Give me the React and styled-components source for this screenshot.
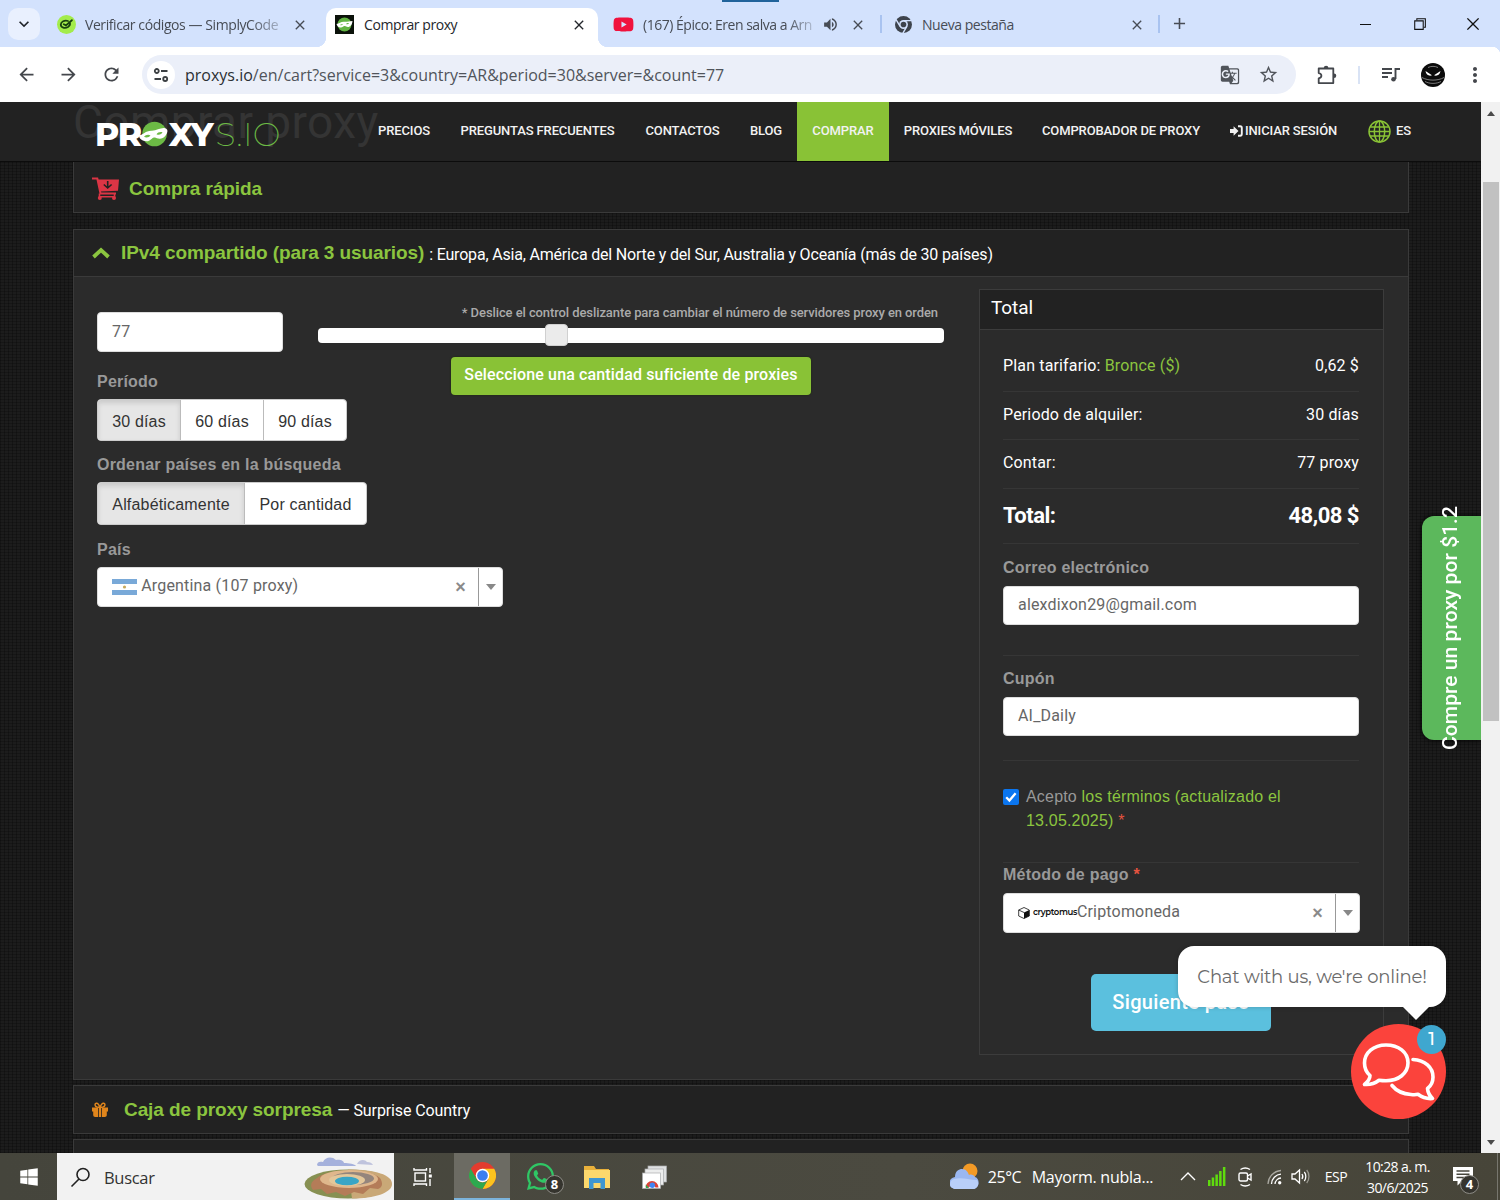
import React from "react";
import styled, { createGlobalStyle, css } from "styled-components";
import {
  MdArrowBack,
  MdArrowForward,
  MdRefresh,
  MdStarOutline,
  MdMoreVert,
  MdVolumeUp,
  MdGTranslate,
  MdClose,
  MdAdd,
  MdKeyboardArrowDown,
} from "react-icons/md";
import {
  VscChromeMinimize,
  VscChromeRestore,
  VscChromeClose,
} from "react-icons/vsc";
import { FaYoutube, FaWhatsapp, FaWindows } from "react-icons/fa";

const sans = `"Liberation Sans", Arial, sans-serif`;
const roboto = `Roboto, "Liberation Sans", sans-serif`;
const segoe = `"Open Sans", "Noto Sans", sans-serif`;
const montserrat = `Montserrat, Inter, sans-serif`;

const GlobalStyle = createGlobalStyle`
  * {
    box-sizing: border-box;
  }
  body {
    margin: 0;
    overflow: hidden;
    font-family: ${sans};
  }
  svg {
    display: block;
    flex: none;
  }
`;

const Screen = styled.div`
  display: flex;
  flex-direction: column;
  width: 1500px;
  height: 1200px;
  overflow: hidden;
`;

const Txt = styled.span`
  letter-spacing: ${(props) => props.$ls || 0}px;
  white-space: nowrap;
`;

/* ---------- browser ---------- */

const TabStrip = styled.div`
  position: relative;
  display: flex;
  align-items: flex-end;
  height: 47px;
  background: #d3e2fd;
  font-family: ${segoe};
  font-size: 14px;
  color: #474c55;
`;
const TopMark = styled.div`
  position: absolute;
  top: 0;
  left: 722px;
  width: 57px;
  height: 2px;
  background: #20639b;
`;
const TabSearch = styled.div`
  display: flex;
  align-items: center;
  justify-content: center;
  width: 32px;
  height: 32px;
  margin: 0 8px 7px;
  border-radius: 10px;
  background: #e9f0fe;
  color: #1f2328;
`;
const Tab = styled.div`
  position: relative;
  display: flex;
  align-items: center;
  width: ${(props) => props.$w}px;
  height: 39px;
  padding: 0 ${(props) => props.$pr || 10}px 6px ${(props) => props.$pl || 9}px;
  ${(props) =>
    props.$active &&
    css`
      background: #fff;
      color: #24272c;
      border-radius: 10px 10px 0 0;
      &:before,
      &:after {
        content: "";
        position: absolute;
        bottom: 0;
        width: 10px;
        height: 10px;
      }
      &:before {
        left: -10px;
        background: radial-gradient(circle at 0 0, transparent 10px, #fff 10.5px);
      }
      &:after {
        right: -10px;
        background: radial-gradient(
          circle at 100% 0,
          transparent 10px,
          #fff 10.5px
        );
      }
    `}
`;
const TabTitle = styled.div`
  flex: 1;
  margin-left: ${(props) => props.$ml || 10}px;
  white-space: nowrap;
  letter-spacing: ${(props) => props.$ls || 0}px;
  ${(props) =>
    props.$fade &&
    css`
      mask-image: linear-gradient(90deg, #000 80%, rgba(0, 0, 0, 0.1) 98%);
    `}
`;
const TabSep = styled.i`
  width: 2px;
  height: 18px;
  margin-bottom: 14px;
  background: #a9c3f0;
`;
const NewTab = styled.div`
  display: flex;
  justify-content: center;
  width: 38px;
  margin-bottom: 14px;
`;
const WindowButtons = styled.div`
  display: flex;
  align-items: center;
  margin-left: auto;
  height: 47px;
  color: #111;
  & > span {
    display: flex;
    justify-content: center;
    width: 54px;
  }
`;
const Toolbar = styled.div`
  position: relative;
  display: flex;
  align-items: center;
  height: 55px;
  padding-left: 5px;
  background: #fff;
  color: #44474c;
  &:before {
    content: "";
    position: absolute;
    top: 0;
    right: 0;
    width: 8px;
    height: 8px;
    background: radial-gradient(circle at 0 100%, transparent 8px, #d3e2fd 8.5px);
  }
`;
const ToolCell = styled.div`
  display: flex;
  flex: none;
  justify-content: center;
  width: ${(props) => props.$w || 42}px;
`;
const Omnibox = styled.div`
  display: flex;
  flex: none;
  align-items: center;
  width: 1154px;
  height: 39px;
  margin-left: 9px;
  padding: 0 17px 0 5px;
  border-radius: 20px;
  background: #ebeff9;
  font-family: ${segoe};
  font-size: 16px;
  color: #50545b;
  & b {
    font-weight: 400;
    color: #2c2f34;
  }
`;
const SiteInfo = styled.div`
  display: flex;
  align-items: center;
  justify-content: center;
  width: 28px;
  height: 28px;
  margin-right: 10px;
  border-radius: 50%;
  background: #fff;
`;
const UrlText = styled.div`
  flex: 1;
`;
const ToolSep = styled.i`
  flex: none;
  width: 2px;
  height: 18px;
  background: #d9e3f5;
`;

/* ---------- site ---------- */

const Viewport = styled.div`
  display: flex;
  height: 1051px;
`;
const Site = styled.div`
  position: relative;
  width: 1481px;
  height: 1051px;
  overflow: hidden;
  background-color: #1c1c1c;
  background-image:
    repeating-linear-gradient(90deg, rgba(0, 0, 0, 0.25) 0 1px, transparent 1px 4px),
    repeating-linear-gradient(0deg, rgba(0, 0, 0, 0.22) 0 1px, transparent 1px 3px);
`;
const Scrollbar = styled.div`
  display: flex;
  flex-direction: column;
  align-items: center;
  width: 19px;
  padding: 9px 0 8px 1px;
  background: #f1f1f1;
`;
const Thumb = styled.div`
  width: 16px;
  height: 539px;
  margin: 66px 0 auto;
  background: #c1c1c1;
`;
const Header = styled.header`
  position: relative;
  display: flex;
  height: 60px;
  padding-left: 95px;
  background: #222;
  border-bottom: 1px solid #0c0c0c;
`;
const Ghost = styled.div`
  position: absolute;
  top: -7px;
  left: 73px;
  font: 400 46px/54px ${roboto};
  letter-spacing: 0.4px;
  color: #343434;
`;
const Brand = styled.div`
  position: relative;
  display: flex;
  align-items: center;
  width: 268px;
  height: 64px;
  font: 800 33px/60px ${montserrat};
  letter-spacing: -1.3px;
  color: #fff;
  & svg {
    margin: 0 0 0 -3px;
  }
`;
const BrandThin = styled.span`
  margin-left: 3px;
  font: 200 33px/60px ${montserrat};
  letter-spacing: 0.3px;
  color: #6cba45;
`;
const NavItem = styled.div`
  position: relative;
  display: flex;
  align-items: center;
  justify-content: center;
  gap: 2px;
  width: ${(props) => props.$w}px;
  height: 59px;
  padding-bottom: 1px;
  font: 500 13px/18px ${roboto};
  letter-spacing: -0.12px;
  white-space: nowrap;
  color: #f2f2f2;
  background: ${(props) => (props.$active ? "#89c236" : "transparent")};
`;
const Panel = styled.section`
  width: 1336px;
  margin: ${(props) => props.$mt || 0}px 0 0 73px;
  border: 1px solid #3a3a3a;
  border-top-width: ${(props) => (props.$cut ? 0 : 1)}px;
  background: #222;
`;
const PanelHead = styled.div`
  display: flex;
  align-items: center;
  height: ${(props) => props.$h}px;
  padding: ${(props) => props.$pt || 0}px 0 0 18px;
  font: 700 19px/24px ${sans};
  color: #8bc53f;
  white-space: nowrap;
  & small {
    font: 400 16px/24px ${roboto};
    color: #fff;
    letter-spacing: ${(props) => props.$sls || 0}px;
    margin: 3px 0 0 5px;
  }
`;
const PanelTitle = styled.span`
  margin-left: ${(props) => props.$ml}px;
  letter-spacing: -0.09px;
`;
const PanelBody = styled.div`
  display: flex;
  height: 803px;
  padding: 0 24px 0 23px;
  border-top: 1px solid #3a3a3a;
  background: #2b2b2b;
`;
const Left = styled.div`
  width: 221px;
  padding-top: 35px;
  flex: none;
`;
const Label = styled.div`
  height: 24px;
  margin: ${(props) => props.$mt || 0}px 0 ${(props) => props.$mb || 6}px;
  font: 700 16px/24px ${sans};
  letter-spacing: 0.22px;
  white-space: nowrap;
  color: #999;
  & i {
    font-style: normal;
    color: #e5533f;
  }
`;
const Field = styled.div`
  display: flex;
  align-items: center;
  width: ${(props) => props.$w}px;
  height: ${(props) => props.$h || 39}px;
  padding: 0 0 ${(props) => props.$pb ?? 2}px 14px;
  border: 1px solid #ddd;
  border-radius: 4px;
  background: #fff;
  font: 400 16px/24px ${roboto};
  letter-spacing: 0.18px;
  color: #666;
`;
const SelectBox = styled(Field)`
  padding: 0 0 0 14px;
  & > span {
    padding-bottom: 2px;
  }
`;
const Clear = styled.b`
  margin: 0 12px 0 auto;
  font: 700 18px/20px ${sans};
  color: #8a8a8a;
`;
const Caret = styled.div`
  display: flex;
  align-items: center;
  justify-content: center;
  width: 24px;
  height: 38px;
  border-left: 1px solid #999;
  &:after {
    content: "";
    border: 5px solid transparent;
    border-top: 6px solid #888;
    border-bottom: 0;
  }
`;
const Group = styled.div`
  display: inline-flex;
  height: ${(props) => props.$h}px;
  border: 1px solid #ccc;
  border-radius: 4px;
  background: #fff;
  overflow: hidden;
  vertical-align: top;
`;
const Choice = styled.div`
  width: ${(props) => props.$w}px;
  font: 400 16px/43px ${sans};
  letter-spacing: 0.18px;
  text-align: center;
  color: #333;
  border-left: 1px solid #bbb;
  white-space: nowrap;
  &:first-child {
    border-left: 0;
  }
  ${(props) =>
    props.$on &&
    css`
      background: #e6e6e6;
      box-shadow: inset 0 3px 5px rgba(0, 0, 0, 0.125);
    `}
`;
const SliderCol = styled.div`
  display: flex;
  flex-direction: column;
  align-items: center;
  width: 626px;
  padding-top: 26px;
`;
const Hint = styled.div`
  align-self: flex-end;
  margin-right: 6px;
  height: 20px;
  font: 500 13px/20px ${roboto};
  letter-spacing: -0.09px;
  color: #aaa;
  white-space: nowrap;
`;
const Track = styled.div`
  position: relative;
  width: 626px;
  height: 15px;
  margin: 5px 0 14px;
  border-radius: 4px;
  background: #fff;
`;
const Handle = styled.div`
  position: absolute;
  top: -4px;
  left: 227px;
  width: 23px;
  height: 22px;
  border: 1px solid #d0d0d0;
  border-radius: 4px;
  background: #ebebeb;
`;
const GreenButton = styled.div`
  width: 360px;
  height: 38px;
  border-radius: 4px;
  background: #89c236;
  box-shadow: 0 0 2px #1c2b08;
  color: #fff;
  text-align: center;
  font: 500 16px/35px ${roboto};
  letter-spacing: 0.14px;
  white-space: nowrap;
`;
const Card = styled.aside`
  width: 405px;
  height: 766px;
  margin: 12px 0 0 auto;
  border: 1px solid #3c3c3c;
  flex: none;
`;
const CardHead = styled.div`
  height: 40px;
  padding-left: 11px;
  background: #222;
  border-bottom: 1px solid #3c3c3c;
  color: #fff;
  font: 400 19px/36px ${roboto};
  letter-spacing: -0.1px;
`;
const CardBody = styled.div`
  padding: 12px 24px 0 23px;
`;
const Row = styled.div`
  display: flex;
  align-items: center;
  justify-content: space-between;
  height: ${(props) => props.$h || 49}px;
  padding-bottom: ${(props) => (props.$big ? 1 : 2)}px;
  border-bottom: 1px solid #363636;
  color: #fff;
  font: ${(props) => (props.$big ? "700 22px" : "400 16px")}/24px ${roboto};
  letter-spacing: ${(props) => (props.$big ? -0.5 : 0.15)}px;
  & em {
    font-style: normal;
    color: #8bc53f;
  }
`;
const Block = styled.div`
  height: ${(props) => props.$h}px;
  padding-top: ${(props) => props.$pt || 0}px;
  border-bottom: ${(props) => (props.$last ? 0 : 1)}px solid #363636;
`;
const Terms = styled.div`
  display: flex;
  gap: 7px;
  font: 400 16px/24px ${sans};
  letter-spacing: 0.19px;
  color: #999;
  & em {
    font-style: normal;
    color: #8bc53f;
  }
  & i {
    font-style: normal;
    color: #e5533f;
  }
  & svg {
    margin-top: 4px;
  }
`;
const NextButton = styled.div`
  width: 180px;
  height: 57px;
  margin: 40px 0 0 88px;
  border-radius: 5px;
  background: #5bc0de;
  color: #fff;
  text-align: center;
  font: 500 20px/56px ${roboto};
  letter-spacing: 0.35px;
`;
const SideOffer = styled.div`
  position: absolute;
  top: 414px;
  right: 0;
  display: flex;
  align-items: center;
  justify-content: center;
  width: 59px;
  height: 224px;
  border-radius: 12px 0 0 12px;
  background: #5cb85c;
  box-shadow: 0 0 5px #000;
  & span {
    writing-mode: vertical-rl;
    transform: rotate(180deg);
    font: 500 21px/24px ${roboto};
    letter-spacing: 0.05px;
    color: #fff;
    white-space: nowrap;
    margin-right: 3px;
  }
`;
const ChatBubble = styled.div`
  position: absolute;
  top: 844px;
  left: 1178px;
  width: 268px;
  height: 61px;
  border-radius: 16px;
  background: #fff;
  color: #6b6b6b;
  text-align: center;
  font: 400 18px/62px ${montserrat};
  letter-spacing: -0.2px;
  white-space: nowrap;
  box-shadow: 0 0 5px rgba(0, 0, 0, 0.2);
  &:after {
    content: "";
    position: absolute;
    left: 224px;
    top: 60px;
    border: 14px solid transparent;
    border-top-color: #fff;
    border-bottom: 0;
  }
`;
const ChatButton = styled.div`
  position: absolute;
  top: 922px;
  left: 1351px;
  width: 95px;
  height: 95px;
  border-radius: 50%;
  background: #fb433c;
`;
const Count = styled.div`
  position: absolute;
  top: 1px;
  right: 0;
  width: 29px;
  height: 29px;
  border-radius: 50%;
  background: #3fa7cf;
  color: #fff;
  text-align: center;
  font: 500 18px/29px ${montserrat};
`;

/* ---------- taskbar ---------- */

const Taskbar = styled.div`
  display: flex;
  align-items: center;
  height: 47px;
  background: linear-gradient(90deg, #45453c, #4b4a40 60%, #474539);
  color: #fff;
  font: 400 16px/22px ${segoe};
`;
const Slot = styled.div`
  position: relative;
  display: flex;
  flex: none;
  align-items: center;
  justify-content: center;
  width: ${(props) => props.$w}px;
  height: 47px;
  padding-right: ${(props) => props.$pr || 0}px;
  white-space: nowrap;
  letter-spacing: ${(props) => props.$ls || 0}px;
  font-size: ${(props) => props.$fs || 16}px;
  ${(props) =>
    props.$on &&
    css`
      background: #6c6b63;
      border-bottom: 2px solid #7cb4dd;
    `}
`;
const SearchBox = styled.div`
  display: flex;
  flex: none;
  align-items: center;
  width: 337px;
  height: 47px;
  padding: 2px 2px 0 13px;
  background: #f2f2f2;
  color: #333;
  font-size: 16.5px;
  & span {
    margin: 0 auto 0 13px;
    letter-spacing: -0.3px;
  }
`;
const TaskBadge = styled.b`
  position: absolute;
  left: ${(props) => props.$x}px;
  top: ${(props) => props.$y}px;
  width: 19px;
  height: 19px;
  border: 1px solid #8d8c86;
  border-radius: 50%;
  background: #35342e;
  font: 700 13px/17px ${segoe};
  text-align: center;
`;
const Tray = styled.div`
  display: flex;
  flex: none;
  align-items: center;
  margin-left: 264px;
`;
const Clock = styled.div`
  width: 81px;
  text-align: center;
  font-size: 14px;
  line-height: 21px;
  letter-spacing: -0.6px;
  white-space: nowrap;
`;
const Edge = styled.i`
  width: 1px;
  height: 47px;
  margin-left: auto;
  margin-right: 2px;
  background: #77766e;
`;

/* ---------- drawings ---------- */

function CodesIcon() {
  return (
    <svg width="19" height="19" viewBox="0 0 19 19">
      <circle cx="9.5" cy="9.5" r="9.5" fill="#a3ec4b" />
      <path
        d="M11 6C7.500 4.800 4 6.800 3.800 9.600c-.1 3 4.200 4.300 7.200 2.400 1.800-1.200 2.300-2.600 1.900-3.900M6.800 9.300l2.100 1.100 6-5.200"
        fill="none"
        stroke="#17420f"
        strokeWidth="1.800"
        strokeLinecap="round"
      />
    </svg>
  );
}

function MaskIcon() {
  return (
    <svg width="19" height="19" viewBox="0 0 19 19">
      <rect width="19" height="19" fill="#0b120a" />
      <circle cx="9.5" cy="9.5" r="7" fill="#62b443" />
      <path
        d="M1.500 9c3-.4 4.500-2.600 8-2.200 2.500.2 5-.8 8-.8-.3 3.500-2 6-4.600 6-1.700 0-2-1.200-3.400-1-1.200.2-2 1.700-4 1.500C3.300 12.300 2 11 1.500 9z"
        fill="#fff"
      />
      <path d="M5 10c1-1 2.200-1 3-.4-.8.8-2 1-3 .4zM11 9c.8-.9 1.900-1.100 3-.7-.6.9-1.800 1.300-3 .7z" fill="#62b443" />
    </svg>
  );
}

function BrandMask() {
  return (
    <svg width="31" height="26" viewBox="0 0 31 26">
      <circle cx="16.500" cy="13" r="12.300" fill="#6cba45" />
      <path
        d="M1 14c3.500.5 6.500-4.500 12.500-4.300 5 .2 9-3.200 13.500-2.500 2.500.4 3 2.800 1.800 5.300-1.300 3-3.800 5-6.800 5.200-3 .1-3.800-1.600-6-1.200-2.500.5-3.600 3.900-7.500 3.800C4.500 20 1 18 1 14z"
        fill="#fff"
      />
      <path d="M6 15.800c1.500-2 4.500-2.600 6.500-1.300-1.300 1.900-4.200 2.600-6.500 1.300zM18.500 13.200c1.300-2 3.700-2.700 6-2-.8 2-3.500 3.300-6 2z" fill="#6cba45" />
    </svg>
  );
}

function ChromeMono() {
  return (
    <svg width="17" height="17" viewBox="0 0 48 48">
      <circle cx="24" cy="24" r="24" fill="#3d434c" />
      <path d="M24 13h23M33.500 29.500 22 49M14.500 29.500 3 10" stroke="#d3e2fd" strokeWidth="4" />
      <circle cx="24" cy="24" r="12.500" fill="#d3e2fd" />
      <circle cx="24" cy="24" r="8" fill="#3d434c" />
    </svg>
  );
}

function ChromeLogo() {
  return (
    <svg width="27" height="27" viewBox="0 0 48 48">
      <circle cx="24" cy="24" r="24" fill="#e33b2e" />
      <path d="M24 12h20.800A24 24 0 0 1 24 48l10.400-18z" fill="#fcc31e" />
      <path d="M3.200 12 13.600 30a12 12 0 0 0 20.800 0L24 48A24 24 0 0 1 3.200 12z" fill="#2da94f" />
      <circle cx="24" cy="24" r="12" fill="#fff" />
      <circle cx="24" cy="24" r="9.5" fill="#3a7ef0" />
    </svg>
  );
}

function TuneIcon() {
  return (
    <svg width="16" height="16" viewBox="0 0 16 16" fill="none" stroke="#3c4043" strokeWidth="1.800">
      <circle cx="3.800" cy="4" r="2" />
      <path d="M8 4h6.500M1.500 12H8" />
      <circle cx="12.200" cy="12" r="2" />
    </svg>
  );
}

function PuzzleIcon() {
  return (
    <svg width="20" height="20" viewBox="0 0 20 20" fill="none" stroke="currentColor" strokeWidth="1.800" strokeLinejoin="round">
      <path d="M1.700 3.500h14.600v14.600H1.700v-4.800c3.600-.6 3.600-4.600 0-5.200z" />
      <path d="M6.800 3a2.300 2.300 0 0 1 4.600 0zM17 8.500a2.300 2.300 0 0 1 0 4.600z" fill="currentColor" stroke="none" />
    </svg>
  );
}

function MediaIcon() {
  return (
    <svg width="20" height="18" viewBox="0 0 20 18" fill="none" stroke="currentColor" strokeWidth="1.900">
      <path d="M1 3h10M1 7h10M1 11h6M14.500 13V3H19" />
      <circle cx="12.500" cy="13.200" r="2.300" fill="currentColor" stroke="none" />
    </svg>
  );
}

function Avatar() {
  return (
    <svg width="24" height="24" viewBox="0 0 24 24">
      <circle cx="12" cy="12" r="12" fill="#0b0b0b" />
      <path d="M4.500 8l6.500 4.300c-3 1.200-6-.6-6.500-4.300zM19.500 8 13 12.300c3 1.200 6-.6 6.500-4.300z" fill="#fff" />
      <path d="M1 14.500c6 3.500 16 3.500 22 0M4 18.500c4.500 2.500 11.500 2.500 16 0M7 4.500c3-1.500 7-1.500 10 0" fill="none" stroke="#aaa" strokeWidth=".7" />
    </svg>
  );
}

function CartIcon() {
  return (
    <svg width="27" height="24" viewBox="0 0 27 24">
      <path d="M0 1.500h5.300l3.200 15H24" fill="none" stroke="#dc3545" strokeWidth="2" />
      <path d="M5.500 2.500H27l-1 11.200-18 .8z" fill="#dc3545" />
      <path d="M15.700 4v6.500M11.800 7.500l3.900 3.500 3.900-3.500" fill="none" stroke="#222" strokeWidth="1.600" />
      <path d="M7.500 16.500v3.300h15v-3.300" fill="none" stroke="#dc3545" strokeWidth="1.600" />
      <circle cx="7.800" cy="21" r="2" fill="#dc3545" />
      <circle cx="22" cy="21" r="2" fill="#dc3545" />
    </svg>
  );
}

function GiftIcon() {
  return (
    <svg width="16" height="16" viewBox="0 0 16 16">
      <path d="M0 5.500h6.200v4H0zM9.800 5.500H16v4H9.800zM1.200 9.500h5V15h-3c-1.200 0-2-.8-2-2zM9.800 9.500h5V13c0 1.200-.8 2-2 2h-3z" fill="#e0851c" />
      <path d="M7 6h2v9H7z" fill="#e0851c" />
      <path d="M8 5.500C6.800 2 5.500 1 4.200 1.300 2.500 1.700 2.700 4.500 5 5zM8 5.500C9.200 2 10.500 1 11.800 1.300c1.700.4 1.500 3.200-.8 3.700z" fill="none" stroke="#e0851c" strokeWidth="1.500" />
    </svg>
  );
}

function ChevronUp() {
  return (
    <svg width="18" height="12" viewBox="0 0 18 12">
      <path d="M1.500 10 9 3l7.500 7" fill="none" stroke="#8bc53f" strokeWidth="3.800" />
    </svg>
  );
}

function SignIn() {
  return (
    <svg width="13" height="12" viewBox="0 0 13 12">
      <path d="M0 4h3.600V1.200L8.500 6l-4.900 4.800V8H0z" fill="#f2f2f2" />
      <path d="M8 1.300h2.200c1 0 1.600.7 1.600 1.600v6.200c0 .9-.6 1.600-1.600 1.600H8" fill="none" stroke="#f2f2f2" strokeWidth="1.900" />
    </svg>
  );
}

function Globe() {
  return (
    <svg width="23" height="23" viewBox="0 0 23 23" fill="none" stroke="#89c236" strokeWidth="1.500">
      <circle cx="11.5" cy="11.5" r="10.500" />
      <ellipse cx="11.5" cy="11.5" rx="5.200" ry="10.500" />
      <path d="M11.500 1v21M2.200 7h18.600M2.200 16h18.600M1 11.500h21" strokeWidth="1.300" />
    </svg>
  );
}

function Flag() {
  return (
    <svg width="25" height="16" viewBox="0 0 25 16">
      <rect width="25" height="16" fill="#fff" />
      <rect width="25" height="5" fill="#79a9d8" />
      <rect y="11" width="25" height="5" fill="#79a9d8" />
      <circle cx="12.500" cy="8" r="1.600" fill="#c6a95c" />
    </svg>
  );
}

const CryptoWord = styled.span`
  margin-left: 3px;
  font: 600 8.5px/20px ${montserrat};
  letter-spacing: -0.38px;
  color: #111;
`;

function CubeIcon() {
  return (
    <svg width="12" height="12" viewBox="0 0 12 12">
      <path d="M6 .5 11.300 3v6L6 11.500.7 9V3z" fill="#fff" stroke="#111" strokeWidth=".8" />
      <path d="M6 5.500 11.300 3v6L6 11.500z" fill="#111" />
      <path d="M.7 3 6 5.500" stroke="#111" strokeWidth=".8" />
    </svg>
  );
}

function CheckIcon() {
  return (
    <svg width="16" height="16" viewBox="0 0 16 16">
      <rect width="16" height="16" rx="2" fill="#0b76f0" />
      <path d="M3.200 8.300l3.200 3.200 6.200-7.300" fill="none" stroke="#fff" strokeWidth="2.300" />
    </svg>
  );
}

function ChatIcon() {
  return (
    <svg width="95" height="95" viewBox="0 0 95 95" fill="none" stroke="#fff" strokeWidth="3.600" strokeLinejoin="round" strokeLinecap="round">
      <path d="M35 21c-12.500 0-21.500 7.700-21.500 18 0 5.500 2 9.500 5.500 12.500 0 3.500-2.500 6.500-5.500 9 6.500.5 11-1.500 14.500-4.200 2.500.4 4.600.5 7 .5 12.500 0 22-7.500 22-18S47.500 21 35 21z" />
      <path d="M62 35.500c12 .5 20 8 20 17.500 0 5-2.200 9-5.500 11.500.3 4 2 7 5 10-6 .5-10.500-1.200-14.500-4.200-2.500.6-4.500.5-7 .2-8-.5-14.500-3.500-19-9" />
    </svg>
  );
}

function Crater() {
  return (
    <svg width="88" height="43" viewBox="0 0 88 43">
      <path d="M13 9c0-3 3-4 6-3 2-5 9-6 13-2 4-1 8 1 8 3 5 0 11 1 12 3H14z" fill="#a5b1dc" />
      <path d="M53 8c2-5 8-5 10-2 3 0 5 1 6 3z" fill="#bfc3dd" />
      <ellipse cx="44" cy="28" rx="43.500" ry="14.500" fill="#879052" />
      <path d="M44 13.500c28 0 44 5.500 44 14.500S70 42.500 48 42.500z" fill="#c9a877" />
      <path d="M13 22c10-9 52-10 63 0 3 5 3 9-2 11l-8-1-7 6-9-2-9 4-9-4-9 2-6-5-8 1c-3-4-3-8 4-12z" fill="#b47c58" />
      <ellipse cx="45" cy="23" rx="29" ry="9" fill="#dfb78c" />
      <ellipse cx="49" cy="22.500" rx="21" ry="6.500" fill="#94857c" />
      <ellipse cx="43" cy="24" rx="18" ry="6" fill="#e3c79a" />
      <ellipse cx="43" cy="25" rx="12" ry="4.300" fill="#39a5c6" />
    </svg>
  );
}

function SearchGlass() {
  return (
    <svg width="21" height="21" viewBox="0 0 21 21" fill="none" stroke="#222" strokeWidth="1.600">
      <circle cx="13" cy="7.500" r="6" />
      <path d="M9 12 1.500 19.500" />
    </svg>
  );
}

function TaskView() {
  return (
    <svg width="20" height="20" viewBox="0 0 20 20" fill="none" stroke="#fff" strokeWidth="1.400">
      <rect x="2" y="6" width="10.500" height="8" />
      <path d="M1 1v2h12.500V1M1 19v-2h12.500v2M17 1v5M17 12v7" />
      <rect x="15.800" y="7.500" width="3" height="3" fill="#fff" stroke="none" />
    </svg>
  );
}

function FolderIcon() {
  return (
    <svg width="26" height="24" viewBox="0 0 26 24">
      <path d="M0 1h10l2 3h13v18H0z" fill="#e9b13b" />
      <path d="M0 5h26v18H0z" fill="#fbd86d" />
      <path d="M5 24V13h16v11h-4.500v-6h-7v6z" fill="#3d96d2" />
    </svg>
  );
}

function CaptureIcon() {
  return (
    <svg width="25" height="24" viewBox="0 0 25 24">
      <rect x="6" y="1" width="18.500" height="16" fill="#dfe1e2" stroke="#a9abad" strokeWidth=".7" />
      <rect x="3" y="4" width="18.500" height="16" fill="#eceded" stroke="#a9abad" strokeWidth=".7" />
      <rect x=".5" y="8" width="18" height="15.500" fill="#fff" stroke="#a9abad" strokeWidth=".7" />
      <path d="M3.500 22.500a6.500 6.500 0 1 1 13 0h-3a3.500 3.500 0 0 0-6.500 0z" fill="#dc4437" />
      <path d="M3.700 19.500 7 23H4z" fill="#2da94f" />
      <circle cx="10.300" cy="20.300" r="2.700" fill="#4285f4" />
    </svg>
  );
}

function WeatherIcon() {
  return (
    <svg width="29" height="27" viewBox="0 0 29 27">
      <circle cx="20" cy="8" r="7.500" fill="#f39a26" />
      <path d="M6 26a6 6 0 0 1-1-12C5 8 9 6 12 6c4 0 6 3 7 6 2-1 5 0 6 2 6 2 4 12-2 12z" fill="#9ab7f1" />
      <path d="M6 26c-7 0-8-8-2-10 8-2 14 1 23 1 3 4 0 9-4 9z" fill="#b9cff9" />
    </svg>
  );
}

function SignalIcon() {
  return (
    <svg width="18" height="19" viewBox="0 0 18 19" fill="#5fdc0e">
      <rect x="0" y="13" width="2.500" height="6" />
      <rect x="3.700" y="10.500" width="2.500" height="8.500" />
      <rect x="7.400" y="7.500" width="2.500" height="11.500" />
      <rect x="11.100" y="4" width="2.500" height="15" />
      <rect x="14.900" y="0" width="2.500" height="19" />
    </svg>
  );
}

function MeetIcon() {
  return (
    <svg width="15" height="20" viewBox="0 0 15 20" fill="none" stroke="#fff" strokeWidth="1.400">
      <rect x="1" y="6" width="8.500" height="8" rx="1.500" />
      <path d="M9.500 9 13 7v6l-3.500-2M2.500 2.500c3-2 6.500-2 9.500 0M2.500 17.500c3 2 6.500 2 9.500 0" />
    </svg>
  );
}

function WifiIcon() {
  return (
    <svg width="16" height="17" viewBox="0 0 16 17" fill="none" stroke="#fff" strokeWidth="1.300">
      <path d="M1 16A14 14 0 0 1 14 2.500" stroke="#a9a8a0" />
      <path d="M4.500 16A10 10 0 0 1 14 6.200M8 16a6.500 6.500 0 0 1 6-6" />
      <circle cx="12.700" cy="14.700" r="1.700" fill="#fff" stroke="none" />
    </svg>
  );
}

function SoundIcon() {
  return (
    <svg width="19" height="17" viewBox="0 0 19 17" fill="none" stroke="#fff" strokeWidth="1.300">
      <path d="M1 6h3l4.500-4v13L4 11H1z" />
      <path d="M11 6c1 1.500 1 3.500 0 5M13.300 4c2 2.500 2 6.500 0 9" />
      <path d="M15.700 2c3 3.500 3 9.500 0 13" stroke="#99988f" />
    </svg>
  );
}

function NoteIcon() {
  return (
    <svg width="20" height="19" viewBox="0 0 20 19">
      <path d="M0 0h20v14H9l-4.500 4.500V14H0z" fill="#fff" />
      <path d="M3.500 4h13M3.500 7.300h13M3.500 10.500h8" stroke="#47463c" strokeWidth="1.400" />
    </svg>
  );
}

function Arrow({ down }) {
  return (
    <svg width="8" height="5" viewBox="0 0 8 5">
      <path d={down ? "M0 0h8L4 5z" : "M0 5h8L4 0z"} fill="#4a4a4a" />
    </svg>
  );
}

/* ---------- sections ---------- */

function Browser() {
  return (
    <>
      <TabStrip>
        <TopMark />
        <TabSearch>
          <MdKeyboardArrowDown size={20} />
        </TabSearch>
        <Tab $w={278} $pr={18}>
          <CodesIcon />
          <TabTitle $fade $ml={9} $ls={-0.42}>
            Verificar códigos — SimplyCode
          </TabTitle>
          <MdClose size={16} />
        </Tab>
        <Tab $w={272} $active $pr={11}>
          <MaskIcon />
          <TabTitle $ls={-0.42}>Comprar proxy</TabTitle>
          <MdClose size={16} />
        </Tab>
        <Tab $w={282} $pl={15} $pr={14}>
          <FaYoutube size={21} color="#f0123d" />
          <TabTitle $fade $ml={9} $ls={-0.48}>
            (167) Épico: Eren salva a Arn
          </TabTitle>
          <MdVolumeUp size={17} />
          <Txt>&nbsp;&nbsp;&nbsp;</Txt>
          <MdClose size={16} />
        </Tab>
        <TabSep />
        <Tab $w={276} $pl={13} $pr={13}>
          <ChromeMono />
          <TabTitle $ls={-0.45}>Nueva pestaña</TabTitle>
          <MdClose size={16} />
        </Tab>
        <TabSep />
        <NewTab>
          <MdAdd size={19} />
        </NewTab>
        <WindowButtons>
          <span>
            <VscChromeMinimize size={16} />
          </span>
          <span>
            <VscChromeRestore size={17} />
          </span>
          <span>
            <VscChromeClose size={18} />
          </span>
        </WindowButtons>
      </TabStrip>
      <Toolbar>
        <ToolCell>
          <MdArrowBack size={21} />
        </ToolCell>
        <ToolCell $w={43}>
          <MdArrowForward size={21} />
        </ToolCell>
        <ToolCell $w={43}>
          <MdRefresh size={21} />
        </ToolCell>
        <Omnibox>
          <SiteInfo>
            <TuneIcon />
          </SiteInfo>
          <UrlText>
            <b>proxys.io</b>
            /en/cart?service=3&amp;country=AR&amp;period=30&amp;server=&amp;count=77
          </UrlText>
          <ToolCell $w={56}>
            <MdGTranslate size={20} />
          </ToolCell>
          <ToolCell $w={21}>
            <MdStarOutline size={21} />
          </ToolCell>
        </Omnibox>
        <ToolCell $w={62}>
          <PuzzleIcon />
        </ToolCell>
        <ToolSep />
        <ToolCell $w={61}>
          <MediaIcon />
        </ToolCell>
        <ToolCell $w={24}>
          <Avatar />
        </ToolCell>
        <ToolCell $w={60}>
          <MdMoreVert size={24} />
        </ToolCell>
      </Toolbar>
    </>
  );
}

function SiteHeader() {
  return (
    <Header>
      <Ghost>Comprar proxy</Ghost>
      <Brand>
        PR
        <BrandMask />
        XY
        <BrandThin>S.IO</BrandThin>
      </Brand>
      <NavItem $w={82}>PRECIOS</NavItem>
      <NavItem $w={185}>PREGUNTAS FRECUENTES</NavItem>
      <NavItem $w={105}>CONTACTOS</NavItem>
      <NavItem $w={62}>BLOG</NavItem>
      <NavItem $w={92} $active>
        COMPRAR
      </NavItem>
      <NavItem $w={138}>PROXIES MÓVILES</NavItem>
      <NavItem $w={188}>COMPROBADOR DE PROXY</NavItem>
      <NavItem $w={137}>
        <SignIn />
        INICIAR SESIÓN
      </NavItem>
      <NavItem $w={75}>
        <Globe />
        <Txt>&nbsp;ES</Txt>
      </NavItem>
    </Header>
  );
}

function OrderForm() {
  return (
    <>
      <Left>
        <Field $w={186} $h={40} $pb={0}>
          77
        </Field>
        <Label $mt={18} $mb={5}>
          Período
        </Label>
        <Group $h={42}>
          <Choice $w={82} $on>
            30 días
          </Choice>
          <Choice $w={83}>60 días</Choice>
          <Choice $w={83}>90 días</Choice>
        </Group>
        <Label $mt={12} $mb={5}>
          Ordenar países en la búsqueda
        </Label>
        <Group $h={43}>
          <Choice $w={146} $on>
            Alfabéticamente
          </Choice>
          <Choice $w={122}>Por cantidad</Choice>
        </Group>
        <Label $mt={13} $mb={5}>
          País
        </Label>
        <SelectBox $w={406} $h={40}>
          <Flag />
          <span>&nbsp;Argentina (107 proxy)</span>
          <Clear>×</Clear>
          <Caret />
        </SelectBox>
      </Left>
      <SliderCol>
        <Hint>
          * Deslice el control deslizante para cambiar el número de servidores
          proxy en orden
        </Hint>
        <Track>
          <Handle />
        </Track>
        <GreenButton>Seleccione una cantidad suficiente de proxies</GreenButton>
      </SliderCol>
    </>
  );
}

function Summary() {
  return (
    <Card>
      <CardHead>Total</CardHead>
      <CardBody>
        <Row $h={50}>
          <span>
            Plan tarifario: <em>Bronce ($)</em>
          </span>
          <span>0,62 $</span>
        </Row>
        <Row $h={48}>
          <span>Periodo de alquiler:</span>
          <span>30 días</span>
        </Row>
        <Row>
          <span>Contar:</span>
          <span>77 proxy</span>
        </Row>
        <Row $h={55} $big>
          <span>Total:</span>
          <span>48,08 $</span>
        </Row>
        <Block $h={112} $pt={12}>
          <Label>Correo electrónico</Label>
          <Field $w={356}>alexdixon29@gmail.com</Field>
        </Block>
        <Block $h={105} $pt={11}>
          <Label>Cupón</Label>
          <Field $w={356}>AI_Daily</Field>
        </Block>
        <Block $h={102} $pt={24}>
          <Terms>
            <CheckIcon />
            <span>
              Acepto <em>los términos (actualizado el</em>
              <br />
              <em>13.05.2025)</em> <i>*</i>
            </span>
          </Terms>
        </Block>
        <Block $h={71} $last>
          <Label>
            Método de pago <i>*</i>
          </Label>
          <SelectBox $w={357} $h={40}>
            <CubeIcon />
            <CryptoWord>cryptomus</CryptoWord>
            <span>Criptomoneda</span>
            <Clear>×</Clear>
            <Caret />
          </SelectBox>
        </Block>
        <NextButton>Siguiente paso</NextButton>
      </CardBody>
    </Card>
  );
}

function Tasks() {
  return (
    <Taskbar>
      <Slot $w={57}>
        <FaWindows size={20} />
      </Slot>
      <SearchBox>
        <SearchGlass />
        <span>Buscar</span>
        <Crater />
      </SearchBox>
      <Slot $w={60} $pr={2}>
        <TaskView />
      </Slot>
      <Slot $w={56} $on>
        <ChromeLogo />
      </Slot>
      <Slot $w={60}>
        <FaWhatsapp size={31} color="#2fc765" />
        <TaskBadge $x={35} $y={22}>
          8
        </TaskBadge>
      </Slot>
      <Slot $w={54}>
        <FolderIcon />
      </Slot>
      <Slot $w={60}>
        <CaptureIcon />
      </Slot>
      <Tray>
        <Slot $w={32}>
          <WeatherIcon />
        </Slot>
        <Slot $w={49} $ls={-0.4}>
          25°C
        </Slot>
        <Slot $w={139} $pr={12} $ls={-0.25}>
          Mayorm. nubla...
        </Slot>
        <Slot $w={40}>
          <svg width="16" height="9" viewBox="0 0 16 9">
            <path d="M1 8 8 1l7 7" fill="none" stroke="#fff" strokeWidth="1.400" />
          </svg>
        </Slot>
        <Slot $w={18}>
          <SignalIcon />
        </Slot>
        <Slot $w={38}>
          <MeetIcon />
        </Slot>
        <Slot $w={22}>
          <WifiIcon />
        </Slot>
        <Slot $w={29}>
          <SoundIcon />
        </Slot>
        <Slot $w={42} $fs={14} $ls={-0.5}>
          ESP
        </Slot>
        <Clock>
          10:28 a. m.
          <br />
          30/6/2025
        </Clock>
        <Slot $w={50}>
          <NoteIcon />
          <TaskBadge $x={22} $y={22}>
            4
          </TaskBadge>
        </Slot>
      </Tray>
      <Edge />
    </Taskbar>
  );
}

export default function App() {
  return (
    <Screen>
      <GlobalStyle />
      <Browser />
      <Viewport>
        <Site>
          <SiteHeader />
          <Panel $cut>
            <PanelHead $h={50} $pt={4}>
              <CartIcon />
              <PanelTitle $ml={10}>Compra rápida</PanelTitle>
            </PanelHead>
          </Panel>
          <Panel $mt={16}>
            <PanelHead $h={46} $sls={-0.19}>
              <ChevronUp />
              <PanelTitle $ml={11}>IPv4 compartido (para 3 usuarios)</PanelTitle>
              <small>
                : Europa, Asia, América del Norte y del Sur, Australia y Oceanía
                (más de 30 países)
              </small>
            </PanelHead>
            <PanelBody>
              <OrderForm />
              <Summary />
            </PanelBody>
          </Panel>
          <Panel $mt={5}>
            <PanelHead $h={47} $sls={-0.1}>
              <GiftIcon />
              <PanelTitle $ml={16}>Caja de proxy sorpresa</PanelTitle>
              <small>— Surprise Country</small>
            </PanelHead>
          </Panel>
          <Panel $mt={5}>
            <PanelHead $h={40} />
          </Panel>
          <SideOffer>
            <span>Compre un proxy por $1.2</span>
          </SideOffer>
          <ChatBubble>Chat with us, we're online!</ChatBubble>
          <ChatButton>
            <ChatIcon />
            <Count>1</Count>
          </ChatButton>
        </Site>
        <Scrollbar>
          <Arrow />
          <Thumb />
          <Arrow down />
        </Scrollbar>
      </Viewport>
      <Tasks />
    </Screen>
  );
}
